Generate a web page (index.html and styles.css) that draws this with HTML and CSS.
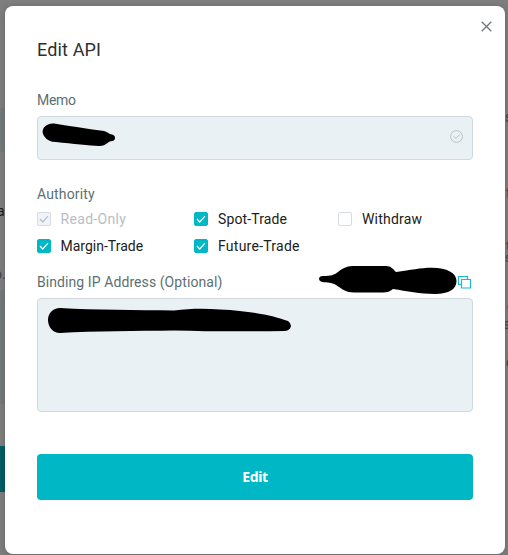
FILE: index.html
```html
<!DOCTYPE html>
<html lang="en">
<head>
<meta charset="utf-8">
<title>Edit API</title>
<link rel="stylesheet" href="styles.css">
</head>
<body>
<div class="backdrop" aria-hidden="true">
  <div class="side side-left">
    <i class="band band-top"></i><i class="band band-mid"></i><i class="band band-button"></i>
    <span class="bit bit-a">a</span><span class="bit bit-o">o.</span>
  </div>
  <div class="side side-right">
    <span class="bit r1">s</span><span class="bit r2">t</span><span class="bit r3">t</span><span class="bit r4">s</span><span class="bit r5">o</span><span class="bit r6">s</span><span class="bit r7">c</span>
  </div>
</div>
<main class="modal">
  <button class="close" aria-label="Close"><svg width="11" height="11" viewBox="0 0 11 11"><path d="M.7.7l9.6 9.6M10.3.7L.7 10.3"/></svg></button>
  <h1 class="title">Edit API</h1>
  <label class="label memo-label">Memo</label>
  <div class="field memo">
    <svg class="scribble" width="76" height="26" viewBox="0 0 76 26"><path d="M5 17C1 11 6 4 15 4.500C31 7 47 9.500 65 12C69 13 70 15 73 15.500Q76 16 76 19Q76 21.500 73 22C70 22 68 25 64 26.500C60 28 37 25 17 23Q9 23 5 17Z"/></svg>
    <svg class="valid" width="13" height="13" viewBox="0 0 13 13"><circle cx="6.500" cy="6.500" r="5.900"/><path d="M3.700 6.300l2.200 2.200 3.600-3.900"/></svg>
  </div>
  <div class="label authority-label">Authority</div>
  <div class="options">
    <label class="option disabled"><span class="box"><svg viewBox="0 0 14 14"><path d="M3 7l2.700 3L11 4.200"/></svg></span><span class="name read">Read-Only</span></label>
    <label class="option"><span class="box on"><svg viewBox="0 0 14 14"><path d="M3 7l2.700 3L11 4.200"/></svg></span><span class="name spot">Spot-Trade</span></label>
    <label class="option"><span class="box"></span><span class="name withdraw">Withdraw</span></label>
    <label class="option"><span class="box on"><svg viewBox="0 0 14 14"><path d="M3 7l2.700 3L11 4.200"/></svg></span><span class="name margin">Margin-Trade</span></label>
    <label class="option"><span class="box on"><svg viewBox="0 0 14 14"><path d="M3 7l2.700 3L11 4.200"/></svg></span><span class="name future">Future-Trade</span></label>
  </div>
  <div class="binding">
    <span class="label binding-label">Binding IP Address (Optional)</span>
    <svg class="ip-scribble" width="139" height="30" viewBox="318 265 139 30"><path d="M319 279Q319 276 323 276C331 276 334 275 338 272C344 267 348 266 355 266H386C391 266 393 269 396 272C411 270 420 267.700 432 267.700C447 267.700 456.500 273 456.500 281C456.500 289 449 294 435 294C420 294 407 291 393 289Q389 292.500 383 292.500H354C346 292.500 342 289 336 285C331 282 328 283 322 282Q319 281 319 279Z"/></svg>
    <svg class="copy" width="14" height="14" viewBox="0 0 14 14"><path d="M4 9.500H.5V1.500H9.500v3M3.500 4.500h9v8.500h-9z"/></svg>
  </div>
  <div class="field addresses">
    <svg class="address-scribble" width="244" height="26" viewBox="48 308 244 26"><path d="M48 320C48 313 53 308 60 308C95 310 137 310 174 310.500C190 308.500 205 308.500 220 309.500C253 311 274 316 288 321Q291 323 291 326Q290 330.500 285 331C246 331.500 210 331.500 174 330.500C137 331 95 331 60 333C53 333 48 327 48 320Z"/></svg>
  </div>
  <button class="submit">Edit</button>
</main>
</body>
</html>
```

FILE: styles.css
```css
* { box-sizing: border-box; }
body { margin: 0; height: 555px; overflow: hidden; background: #7e7e7e; font: 14px/20px Roboto, "Liberation Sans", sans-serif; color: #1b2020; position: relative; }
.backdrop { position: absolute; inset: 0; }
.side { position: absolute; top: 0; bottom: 0; overflow: hidden; }
.side-left { left: 0; width: 5px; }
.side-right { right: 0; width: 3px; }
.band { position: absolute; left: 0; width: 5px; background: #747a7b; }
.band-top { top: 108px; height: 44px; }
.band-mid { top: 290px; height: 114px; }
.band-button { top: 446px; height: 46px; background: #005d64; }
.bit { position: absolute; left: 0; color: #444; white-space: nowrap; }
.bit-a { top: 201px; left: -3px; color: #151b1b; }
.bit-o { top: 264px; left: -6px; }
.r1 { top: 107px; } .r2 { top: 183px; left: 1px; } .r3 { top: 236px; left: 1px; } .r4 { top: 248px; }
.r3, .r4 { font-size: 12px; }
.r5 { top: 296px; left: 2px; } .r6 { top: 314px; left: -2px; } .r7 { top: 352px; left: 1px; }
.modal { position: relative; width: 500px; height: 548px; margin: 6px 0 0 5px; padding: 31px 32px 0; display: flow-root; background: #fff; border-radius: 8px; box-shadow: 0 1px 6px rgba(0,0,0,.2); }
.close { position: absolute; top: 15px; right: 13px; width: 11px; height: 11px; padding: 0; border: 0; background: none; }
svg { display: block; fill: none; }
.close svg { stroke: #70757a; stroke-width: 1.3; }
.title { margin: 0; font-size: 18px; line-height: 26px; font-weight: 400; color: #2d3030; letter-spacing: .15px; }
.label { display: block; color: #5c7074; }
.memo-label { margin-top: 27px; letter-spacing: -.3px; }
.field { background: #e9f1f4; border: 1px solid #d0d9e0; border-radius: 4px; }
.memo { height: 44px; margin-top: 6px; padding: 2px 9px 0 0; display: flex; justify-content: space-between; }
.scribble, .ip-scribble, .address-scribble { fill: #000; overflow: visible; }
.memo .scribble { margin: 0 0 0 1px; }
.valid { margin-top: 11px; stroke: #bbc1c4; stroke-width: 1; }
.authority-label { margin-top: 24px; letter-spacing: .15px; }
.options { display: grid; grid-template-columns: 157px 144px 1fr; row-gap: 7px; margin-top: 5px; }
.option { display: flex; align-items: center; gap: 10px; height: 20px; }
.box { width: 14px; height: 14px; flex: none; border: 1px solid #d7dbe5; border-radius: 2px; }
.box svg { width: 14px; height: 14px; margin: -1px; stroke: #fff; stroke-width: 1.2; }
.box.on { background: #00b8c5; border-color: #00b8c5; }
.read { letter-spacing: .32px; }
.spot { letter-spacing: .12px; }
.withdraw { letter-spacing: .2px; }
.future { letter-spacing: .25px; }
.read, .margin { margin-left: -.5px; }
.disabled { color: #b8bdc5; }
.disabled .box { background: #eff3fa; }
.disabled .box svg { stroke: #b9bec8; }
.binding { display: flex; height: 30px; margin-top: 9px; }
.binding-label { width: 281px; margin-top: 7px; white-space: nowrap; letter-spacing: .08px; }
.copy { margin: 10px 0 0 1px; stroke: #19bdc9; stroke-width: 1.2; }
.addresses { height: 114px; margin-top: 3px; padding: 9px 0 0 10px; }
.submit { display: block; width: 100%; height: 46px; margin-top: 42px; padding: 0; border: 0; border-radius: 4px; background: #00b8c5; color: #fff; font: 700 14px/46px "Noto Sans", sans-serif; letter-spacing: -.4px; }
```
